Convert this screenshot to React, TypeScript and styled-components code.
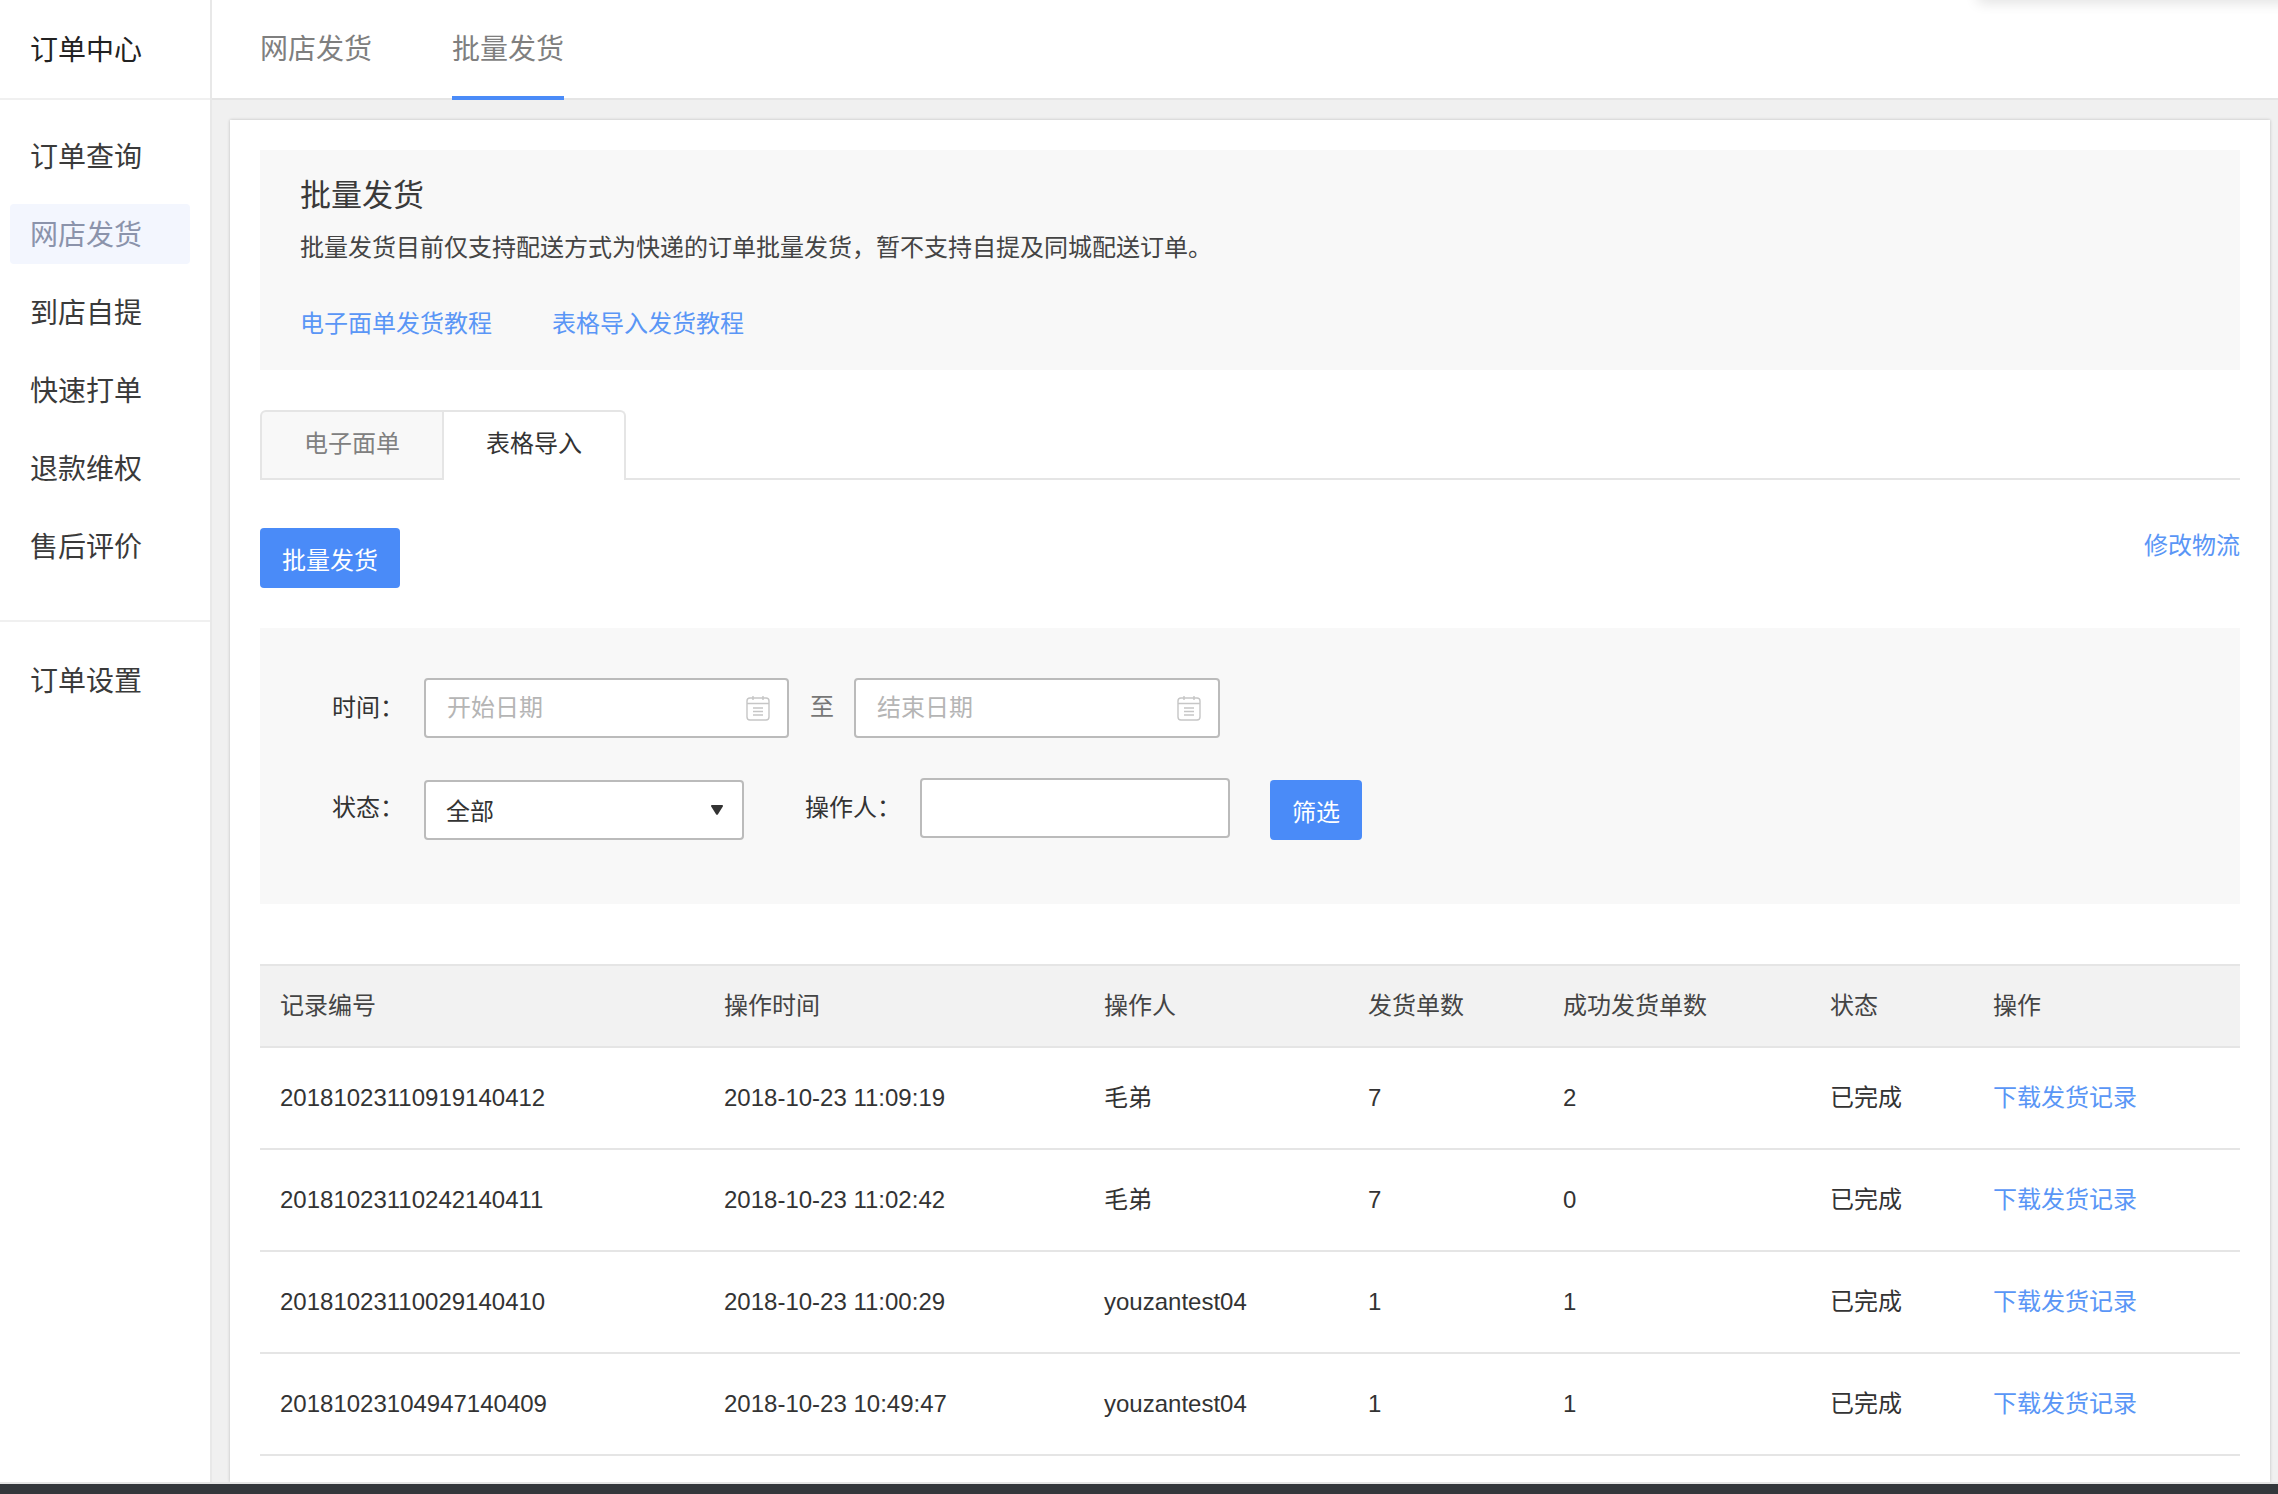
import React from "react";
import styled, { createGlobalStyle } from "styled-components";

const GlobalStyle = createGlobalStyle`
    html, body {
        margin: 0;
        padding: 0;
        background: #fff;
    }
    body {
        font-family: "Liberation Sans", "Noto Sans CJK SC", sans-serif;
        font-size: 24px;
        color: #333;
    }
    * { box-sizing: border-box; }
`;

const Page = styled.div`
    position: relative;
    display: flex;
    flex-direction: column;
    width: 2278px;
    height: 1494px;
    overflow: hidden;
`;

const Body = styled.div`
    display: flex;
    flex: 1;
    min-height: 0;
`;

const Sidebar = styled.aside`
    flex: 0 0 212px;
    border-right: 2px solid #e8e8e8;
    background: #fff;
`;

const Brand = styled.div`
    height: 100px;
    padding-left: 30px;
    border-bottom: 2px solid #f0f0f0;
    font-size: 28px;
    line-height: 102px;
    color: #222;
`;

const SideGroup = styled.nav`
    display: flex;
    flex-direction: column;
    gap: 18px;
    padding: 26px 0 44px;
    & + & {
        border-top: 2px solid #f0f0f0;
        padding-top: 28px;
    }
`;

const SideItem = styled.div<{ $active?: boolean }>`
    height: 60px;
    margin: 0 20px 0 10px;
    padding-left: 20px;
    border-radius: 4px;
    font-size: 28px;
    line-height: 64px;
    color: ${props => (props.$active ? "#8b93ab" : "#3a3a3a")};
    background: ${props => (props.$active ? "#f3f6fe" : "transparent")};
`;

const Main = styled.main`
    display: flex;
    flex: 1;
    flex-direction: column;
    min-width: 0;
    background: #f0f0f0;
`;

const TopNav = styled.div`
    display: flex;
    flex: 0 0 100px;
    gap: 80px;
    min-height: 0;
    padding-left: 48px;
    background: #fff;
    border-bottom: 2px solid #e5e5e5;
`;

const TopTab = styled.div<{ $active?: boolean }>`
    height: 100px;
    font-size: 28px;
    line-height: 99px;
    color: #7f7f7f;
    border-bottom: 4px solid ${props => (props.$active ? "#4a8bf8" : "transparent")};
`;

const Card = styled.section`
    flex: 1;
    margin: 20px 8px 0 18px;
    padding: 30px 30px 0;
    background: #fff;
    box-shadow: 0 0 3px rgba(0, 0, 0, 0.22);
`;

const Banner = styled.div`
    height: 220px;
    padding: 24px 40px 0;
    background: #f8f8f8;
`;

const BannerTitle = styled.h2`
    margin: 0;
    font-size: 31px;
    font-weight: 400;
    line-height: 44px;
    color: #3a3a3a;
`;

const BannerText = styled.p`
    margin: 12px 0 0;
    line-height: 36px;
    color: #444;
`;

const BannerLinks = styled.div`
    display: flex;
    gap: 60px;
    margin-top: 40px;
    line-height: 36px;
`;

const TextLink = styled.a`
    color: #5a96f6;
    text-decoration: none;
`;

const TabBar = styled.div`
    display: flex;
    height: 70px;
    margin-top: 40px;
    border-bottom: 2px solid #e5e5e5;
`;

const Tab = styled.div<{ $active?: boolean; $width: number }>`
    width: ${props => props.$width}px;
    height: 70px;
    border: 2px solid #e5e5e5;
    border-bottom: ${props => (props.$active ? "none" : "2px solid #e5e5e5")};
    border-left: ${props => (props.$active ? "none" : "2px solid #e5e5e5")};
    border-radius: ${props => (props.$active ? "0 6px 0 0" : "6px 0 0 0")};
    font-size: 24px;
    line-height: 64px;
    text-align: center;
    color: ${props => (props.$active ? "#333" : "#808080")};
    background: ${props => (props.$active ? "#fff" : "#f8f8f8")};
`;

const ActionRow = styled.div`
    display: flex;
    align-items: flex-start;
    justify-content: space-between;
    margin-top: 48px;
`;

const ActionLink = styled(TextLink)`
    line-height: 36px;
`;

const PrimaryButton = styled.button<{ $width: number; $offset?: number; $gap?: number }>`
    width: ${props => props.$width}px;
    height: 60px;
    margin-top: ${props => props.$offset ?? 0}px;
    margin-left: ${props => props.$gap ?? 0}px;
    padding: 0;
    border: none;
    border-radius: 4px;
    font: inherit;
    color: #fff;
    background: #4a8bf8;
`;

const FilterPanel = styled.div`
    height: 276px;
    margin-top: 40px;
    padding: 50px 0 0 72px;
    background: #f8f8f8;
`;

const FilterRow = styled.div`
    display: flex;
    align-items: flex-start;
    height: 62px;
    & + & {
        margin-top: 38px;
    }
`;

const FieldLabel = styled.label<{ $width: number; $gap?: number }>`
    flex: 0 0 ${props => props.$width}px;
    margin-left: ${props => props.$gap ?? 0}px;
    line-height: 60px;
    color: #333;
`;

const FieldBox = styled.div<{ $width: number; $offset?: number }>`
    display: flex;
    align-items: center;
    justify-content: space-between;
    width: ${props => props.$width}px;
    height: 60px;
    margin-top: ${props => props.$offset ?? 0}px;
    padding: 0 17px 0 20px;
    border: 2px solid #bbb;
    border-radius: 4px;
    background: #fff;
`;

const DateInput = styled.input`
    width: 240px;
    padding: 0 0 0 1px;
    border: none;
    outline: none;
    font: inherit;
    background: transparent;
    &::placeholder {
        color: #b5b5b5;
        opacity: 1;
    }
`;

const Between = styled.span`
    flex: 0 0 65px;
    padding-left: 21px;
    line-height: 58px;
    color: #777;
`;

const SelectValue = styled.span`
    padding-bottom: 2px;
    color: #333;
`;

const Caret = styled.svg`
    margin-right: 2px;
`;

const Table = styled.table`
    width: 100%;
    margin-top: 60px;
    border-collapse: separate;
    border-spacing: 0;
    table-layout: fixed;
`;

const HeadCell = styled.th`
    height: 84px;
    padding: 0;
    border-top: 2px solid #e5e5e5;
    border-bottom: 2px solid #e5e5e5;
    font-weight: 400;
    line-height: 30px;
    text-align: left;
    color: #444;
    background: #f2f2f2;
    &:first-child {
        padding-left: 20px;
    }
`;

const Cell = styled.td`
    height: 102px;
    padding: 0;
    border-bottom: 2px solid #e5e5e5;
    line-height: 30px;
    color: #333;
    &:first-child {
        padding-left: 20px;
    }
`;

const BottomBar = styled.div`
    flex: 0 0 12px;
    border-top: 2px solid #e5e5e5;
    background: #33373b;
`;

const CornerShadow = styled.div`
    position: absolute;
    top: -12px;
    right: -20px;
    width: 320px;
    height: 12px;
    box-shadow: 0 2px 14px rgba(0, 0, 0, 0.14);
`;

const CalendarIcon = () => (
    <svg width="24" height="26" viewBox="0 0 24 26" fill="none" stroke="#c6c6c6" strokeWidth="1.4">
        <rect x="1" y="3" width="22" height="22" rx="3" />
        <path d="M1 8.5h22M7 1v4M17 1v4M7 13h10M7 16.5h10M7 20h10" />
    </svg>
);

const CaretIcon = () => (
    <Caret width="12" height="10" viewBox="0 0 12 10">
        <path d="M1 0h10c.8 0 1.2.8.8 1.5L6.8 9.4c-.4.6-1.2.6-1.6 0L.2 1.5C-.2.8.2 0 1 0z" fill="#333" />
    </Caret>
);

const sideGroups = [
    ["订单查询", "网店发货", "到店自提", "快速打单", "退款维权", "售后评价"],
    ["订单设置"],
];

const columns = [
    { title: "记录编号", width: 464 },
    { title: "操作时间", width: 380 },
    { title: "操作人", width: 264 },
    { title: "发货单数", width: 195 },
    { title: "成功发货单数", width: 267 },
    { title: "状态", width: 163 },
    { title: "操作", width: 247 },
];

const records = [
    { id: "20181023110919140412", time: "2018-10-23 11:09:19", operator: "毛弟", total: 7, success: 2 },
    { id: "20181023110242140411", time: "2018-10-23 11:02:42", operator: "毛弟", total: 7, success: 0 },
    { id: "20181023110029140410", time: "2018-10-23 11:00:29", operator: "youzantest04", total: 1, success: 1 },
    { id: "20181023104947140409", time: "2018-10-23 10:49:47", operator: "youzantest04", total: 1, success: 1 },
];

export default function App() {
    return (
        <Page>
            <GlobalStyle />
            <Body>
                <Sidebar>
                    <Brand>订单中心</Brand>
                    {sideGroups.map(group => (
                        <SideGroup key={group[0]}>
                            {group.map(item => (
                                <SideItem key={item} $active={item === "网店发货"}>{item}</SideItem>
                            ))}
                        </SideGroup>
                    ))}
                </Sidebar>
                <Main>
                    <TopNav>
                        <TopTab>网店发货</TopTab>
                        <TopTab $active>批量发货</TopTab>
                    </TopNav>
                    <Card>
                        <Banner>
                            <BannerTitle>批量发货</BannerTitle>
                            <BannerText>批量发货目前仅支持配送方式为快递的订单批量发货，暂不支持自提及同城配送订单。</BannerText>
                            <BannerLinks>
                                <TextLink>电子面单发货教程</TextLink>
                                <TextLink>表格导入发货教程</TextLink>
                            </BannerLinks>
                        </Banner>
                        <TabBar>
                            <Tab $width={184}>电子面单</Tab>
                            <Tab $width={182} $active>表格导入</Tab>
                        </TabBar>
                        <ActionRow>
                            <PrimaryButton $width={140}>批量发货</PrimaryButton>
                            <ActionLink>修改物流</ActionLink>
                        </ActionRow>
                        <FilterPanel>
                            <FilterRow>
                                <FieldLabel $width={92}>时间：</FieldLabel>
                                <FieldBox $width={365}>
                                    <DateInput placeholder="开始日期" readOnly />
                                    <CalendarIcon />
                                </FieldBox>
                                <Between>至</Between>
                                <FieldBox $width={366}>
                                    <DateInput placeholder="结束日期" readOnly />
                                    <CalendarIcon />
                                </FieldBox>
                            </FilterRow>
                            <FilterRow>
                                <FieldLabel $width={92}>状态：</FieldLabel>
                                <FieldBox $width={320} $offset={2}>
                                    <SelectValue>全部</SelectValue>
                                    <CaretIcon />
                                </FieldBox>
                                <FieldLabel $width={115} $gap={61}>操作人：</FieldLabel>
                                <FieldBox $width={310} />
                                <PrimaryButton $width={92} $offset={2} $gap={40}>筛选</PrimaryButton>
                            </FilterRow>
                        </FilterPanel>
                        <Table>
                            <colgroup>
                                {columns.map(col => <col key={col.title} width={col.width} />)}
                            </colgroup>
                            <thead>
                                <tr>
                                    {columns.map(col => <HeadCell key={col.title}>{col.title}</HeadCell>)}
                                </tr>
                            </thead>
                            <tbody>
                                {records.map(record => (
                                    <tr key={record.id}>
                                        <Cell>{record.id}</Cell>
                                        <Cell>{record.time}</Cell>
                                        <Cell>{record.operator}</Cell>
                                        <Cell>{record.total}</Cell>
                                        <Cell>{record.success}</Cell>
                                        <Cell>已完成</Cell>
                                        <Cell><TextLink>下载发货记录</TextLink></Cell>
                                    </tr>
                                ))}
                            </tbody>
                        </Table>
                    </Card>
                </Main>
            </Body>
            <BottomBar />
            <CornerShadow />
        </Page>
    );
}
